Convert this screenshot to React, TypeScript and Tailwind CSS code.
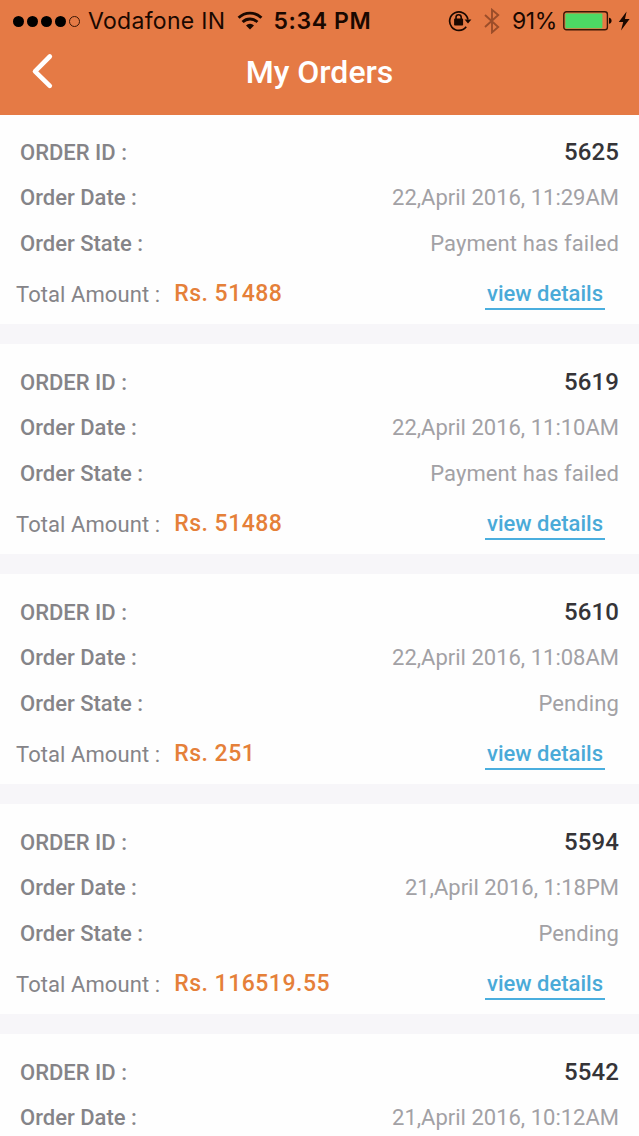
import { ReactNode } from "react";

type Order = {
  id: string;
  date: string;
  state?: string;
  amount?: string;
};

const orders: Order[] = [
  { id: "5625", date: "22,April 2016, 11:29AM", state: "Payment has failed", amount: "51488" },
  { id: "5619", date: "22,April 2016, 11:10AM", state: "Payment has failed", amount: "51488" },
  { id: "5610", date: "22,April 2016, 11:08AM", state: "Pending", amount: "251" },
  { id: "5594", date: "21,April 2016, 1:18PM", state: "Pending", amount: "116519.55" },
  { id: "5542", date: "21,April 2016, 10:12AM" },
];

function WifiIcon() {
  return (
    <svg className="ml-3 h-[20px] w-[26px] shrink-0" viewBox="0 0 26 20" fill="none" stroke="#1a0800" strokeWidth="2.9">
      <path d="M1.6 6.8a16.2 16.2 0 0 1 22.8 0" />
      <path d="M5.6 11a10.5 10.5 0 0 1 14.8 0" />
      <path d="M13 18.6l-4-4.2a5.7 5.7 0 0 1 8 0z" fill="#1a0800" stroke="none" />
    </svg>
  );
}

function RotationLockIcon() {
  return (
    <svg className="h-[22px] w-[24px] shrink-0" viewBox="0 0 24 22" fill="none">
      <path d="M18.2 16.7A9.2 9.2 0 1 1 19.9 9.5" stroke="#1a0800" strokeWidth="1.7" />
      <path d="M16.6 9.4h6.8L20 13.4z" fill="#1a0800" />
      <rect x="6.1" y="8.6" width="9" height="6.9" rx="0.8" fill="#1a0800" />
      <path d="M8 9V7.3a2.6 2.6 0 0 1 5.2 0V9" stroke="#1a0800" strokeWidth="1.6" />
    </svg>
  );
}

function BluetoothIcon() {
  return (
    <svg className="ml-3 h-[26px] w-[16px] shrink-0" viewBox="0 0 16 26" fill="none" stroke="#9b4d29" strokeWidth="1.9">
      <path d="M1 7l13.2 12L8 24.4V1.8L14.2 7 1 19" />
    </svg>
  );
}

function BatteryIcon() {
  return (
    <svg className="ml-[6px] h-[20px] w-[50px] shrink-0" viewBox="0 0 50 20" fill="none">
      <rect x="0.8" y="0.8" width="43.6" height="18" rx="2.6" stroke="#3a1605" strokeWidth="1.4" />
      <rect x="2.4" y="2.4" width="37" height="14.8" rx="1" fill="#4cd964" />
      <path d="M46 6.8c1.6.2 2.6 1.4 2.6 3s-1 2.8-2.6 3z" fill="#1a0800" />
    </svg>
  );
}

function StatusBar() {
  return (
    <div className="flex h-[42px] items-center pl-[13px] pr-[9px] font-['Inter'] text-[#1a0800]">
      <div className="flex gap-[3px]">
        <span className="size-[11px] rounded-full bg-black" />
        <span className="size-[11px] rounded-full bg-black" />
        <span className="size-[11px] rounded-full bg-black" />
        <span className="size-[11px] rounded-full bg-black" />
        <span className="size-[11px] rounded-full border border-[#3a1605]" />
      </div>
      <span className="ml-[8px] text-[23px] tracking-[0.3px]">Vodafone IN</span>
      <WifiIcon />
      <span className="ml-[10px] text-[23px] font-semibold tracking-[0.6px]">5:34 PM</span>
      <div className="ml-auto flex items-center">
        <RotationLockIcon />
        <BluetoothIcon />
        <span className="ml-[12px] text-[23px] tracking-[-0.4px]">91%</span>
        <BatteryIcon />
        <svg className="ml-[5px] h-[20px] w-[12px] shrink-0" viewBox="0 0 12 20" fill="#1a0800">
          <path d="M8.6 0.5L0.8 11h4.400L3 19.5 11.6 8H7z" />
        </svg>
      </div>
    </div>
  );
}

function Header() {
  return (
    <header className="h-[115px] bg-[#e57a45]">
      <StatusBar />
      <div className="relative flex h-[60px] items-center justify-center">
        <button aria-label="Back" className="absolute left-[30px] top-[9px]">
          <svg width="24" height="40" viewBox="0 0 24 40" fill="none" stroke="#fff" strokeWidth="4.6" strokeLinecap="round" strokeLinejoin="round">
            <path d="M19.8 5.5L5 20.3l14.8 14.5" />
          </svg>
        </button>
        <h1 className="text-[32px] font-medium text-white">My Orders</h1>
      </div>
    </header>
  );
}

function Label({ children }: { children: ReactNode }) {
  return <span className="text-[22px] font-medium text-[#858488]">{children}</span>;
}

function OrderCard({ order }: { order: Order }) {
  return (
    <article className="mb-5 bg-[#fefefe] pt-[15px] pb-[2px] first:pt-[14px]">
      <div className="flex h-[46px] items-center justify-between px-5">
        <Label>ORDER ID :</Label>
        <span className="text-[24px] font-medium tracking-[0.1px] text-[#353438]">{order.id}</span>
      </div>
      <div className="flex h-[45px] items-center justify-between px-5">
        <Label>Order Date :</Label>
        <span className="text-[22px] text-[#a2a1a5]">{order.date}</span>
      </div>
      {order.state && (
        <div className="flex h-[46px] items-center justify-between px-5">
          <Label>Order State :</Label>
          <span className="text-[22px] tracking-[0.1px] text-[#a2a1a5]">{order.state}</span>
        </div>
      )}
      {order.amount && (
        <div className="flex h-[56px] items-center pl-4 pr-[34px]">
          <span className="text-[22px] tracking-[0.08px] text-[#858488]">Total Amount :</span>
          <span className="ml-[14px] text-[23px] font-medium tracking-[0.5px] text-[#e58039]">Rs. {order.amount}</span>
          <a href="#" className="ml-auto h-[31px] border-b-2 border-[#4aaede] px-[2px] text-[22px] leading-[30px] font-medium text-[#4aaad8]">
            view details
          </a>
        </div>
      )}
    </article>
  );
}

export default function App() {
  return (
    <div className="h-[1136px] w-[639px] overflow-hidden bg-[#f7f6f9] font-['Roboto',sans-serif]">
      <Header />
      <main>
        {orders.map((order) => (
          <OrderCard key={order.id} order={order} />
        ))}
      </main>
    </div>
  );
}
